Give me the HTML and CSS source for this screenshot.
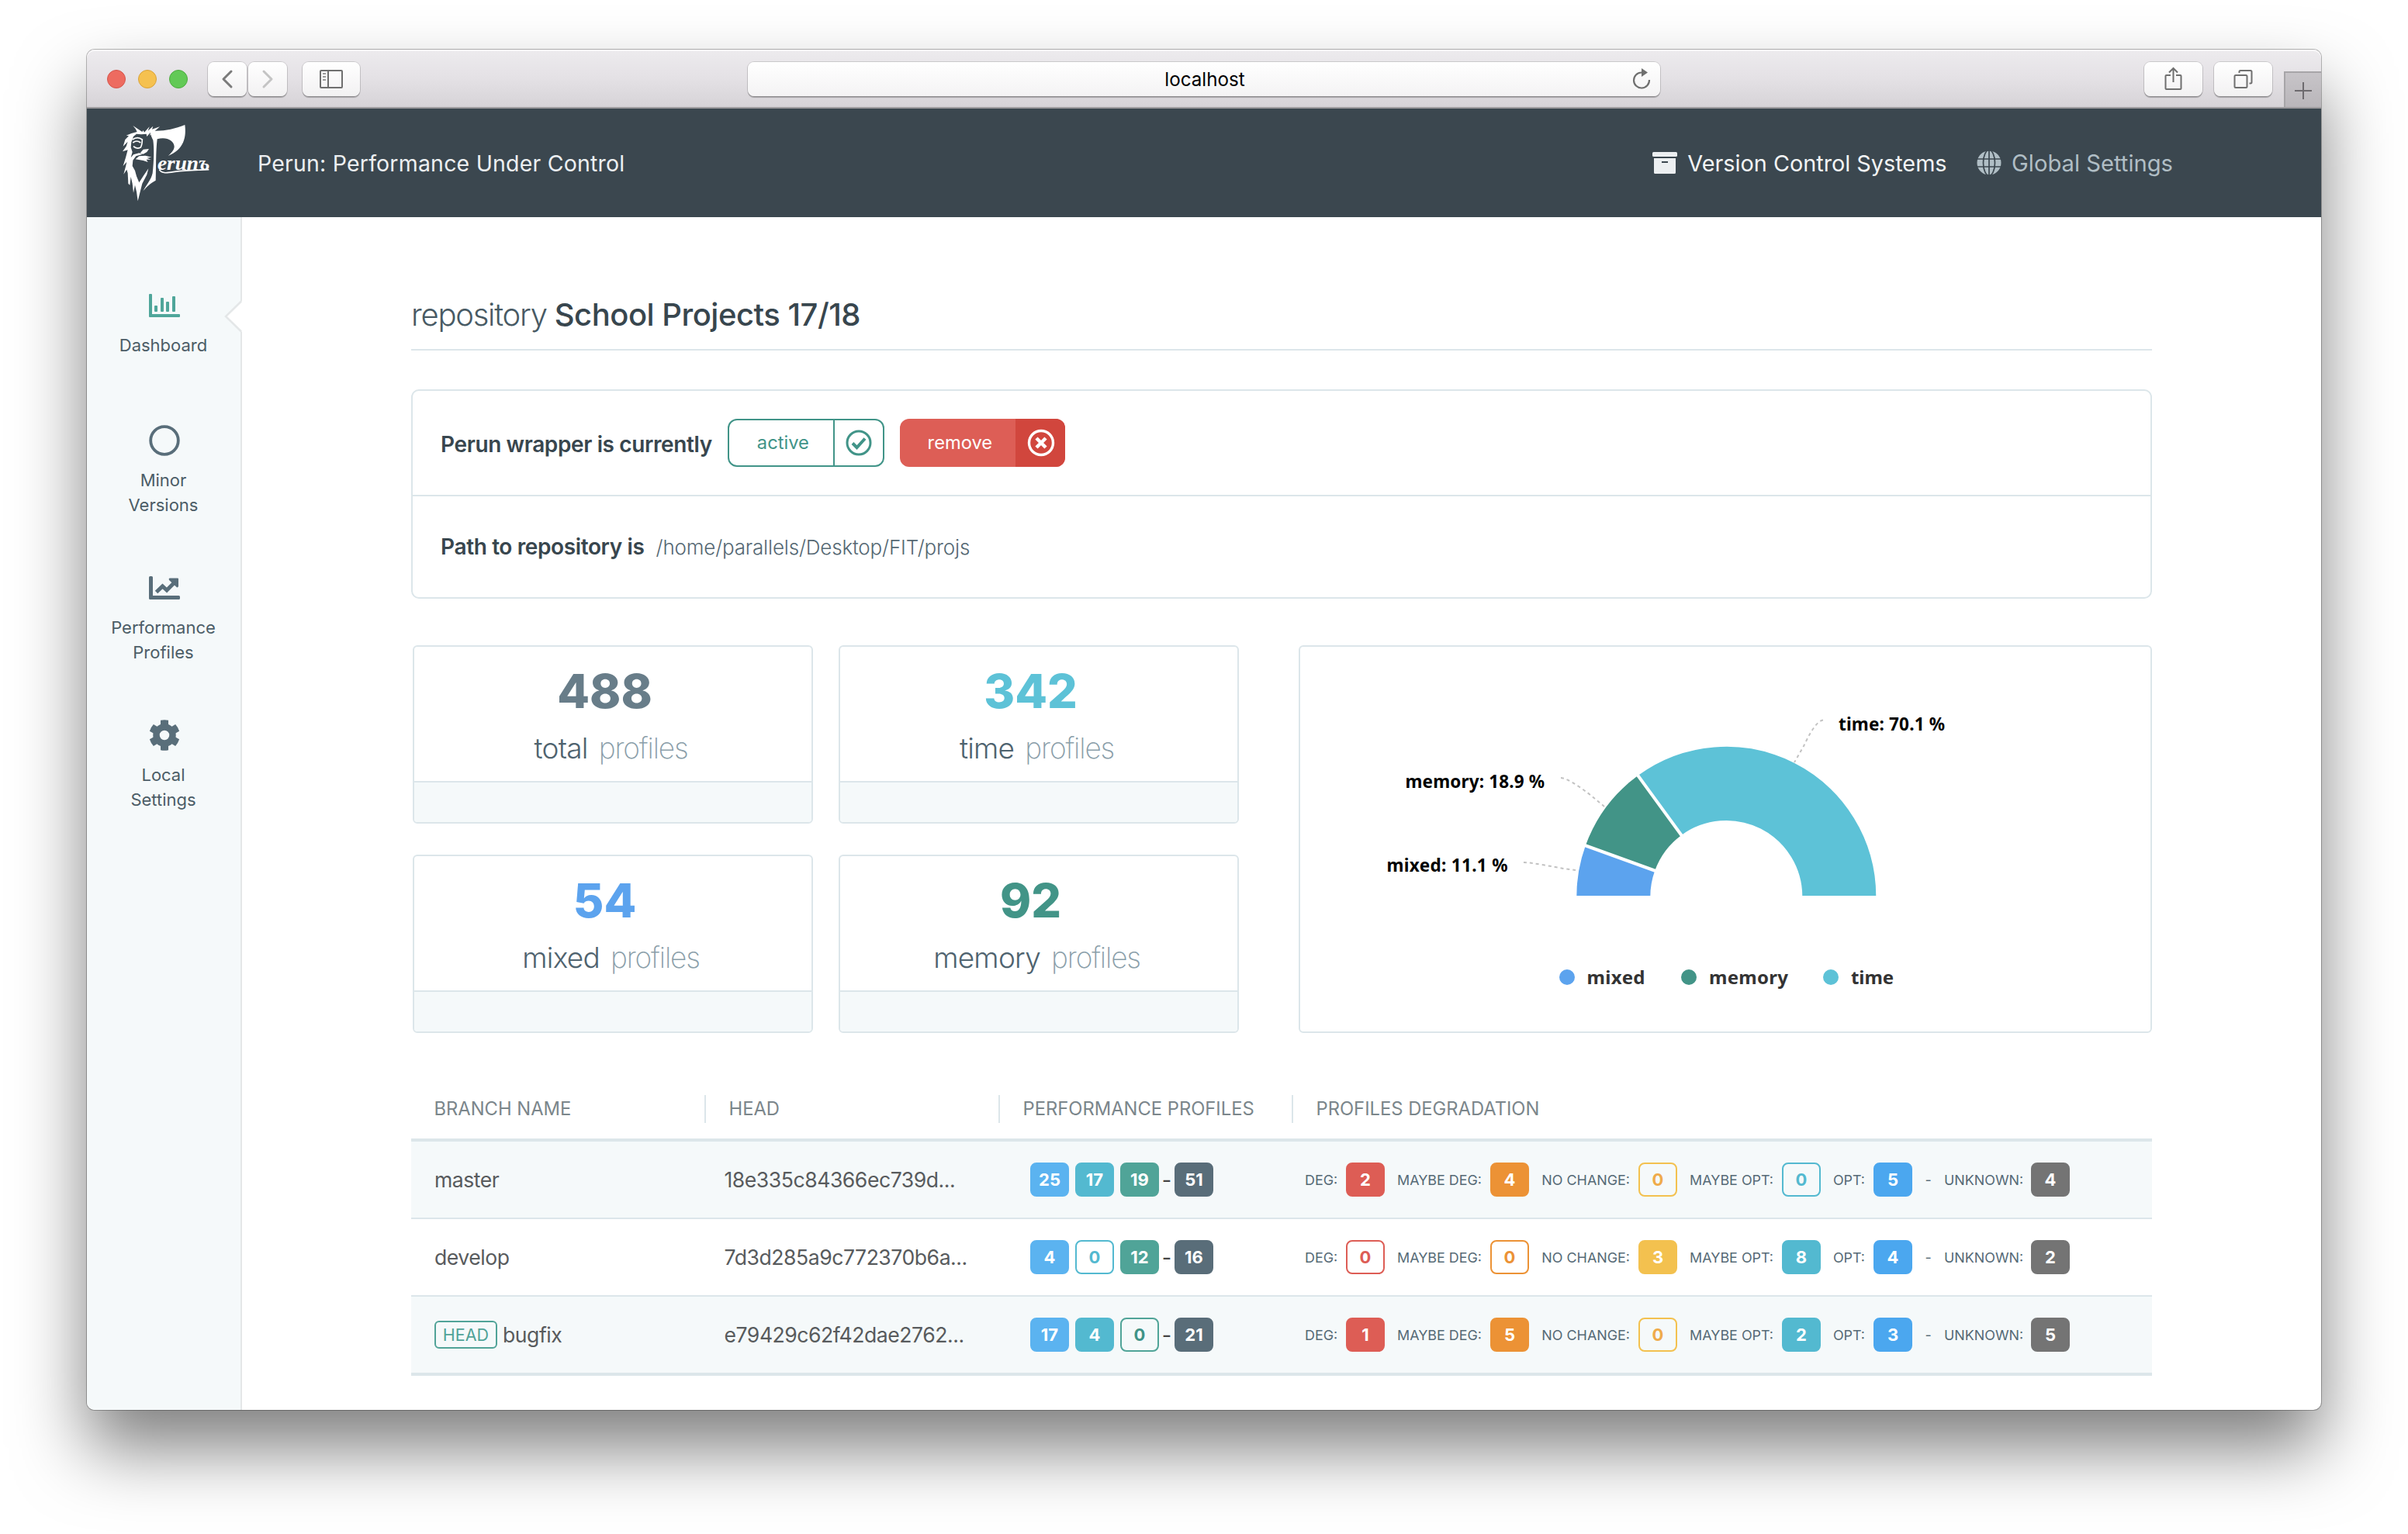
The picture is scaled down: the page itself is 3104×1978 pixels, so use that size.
FILE: index.html
```html
<!DOCTYPE html>
<html lang="en">
<head>
<meta charset="utf-8">
<title>Perun: Performance Under Control</title>
<link rel="stylesheet" href="styles.css">
</head>
<body>
<div class="window">
  <div class="toolbar">
    <div class="lights"><i class="light red"></i><i class="light yellow"></i><i class="light green"></i></div>
    <div class="nav-buttons">
      <span class="tool-btn nav"><svg width="50" height="44" viewBox="0 0 50 44"><path d="M30 12 L20 22 L30 32" fill="none" stroke="#7b7b7b" stroke-width="3" stroke-linecap="round" stroke-linejoin="round"/></svg></span>
      <span class="tool-btn nav"><svg width="50" height="44" viewBox="0 0 50 44"><path d="M20 12 L30 22 L20 32" fill="none" stroke="#c4c4c4" stroke-width="3" stroke-linecap="round" stroke-linejoin="round"/></svg></span>
    </div>
    <span class="tool-btn side"><svg width="74" height="44" viewBox="0 0 74 44"><g fill="none" stroke="#6f6f6f" stroke-width="2"><rect x="23" y="11" width="28" height="22" rx="1"/><path d="M33 11 V33"/></g><path d="M26 15 h4 M26 19 h4 M26 23 h4" stroke="#9a9a9a" stroke-width="2"/></svg></span>
    <div class="address">localhost
      <svg class="reload" width="30" height="34" viewBox="0 0 30 34"><path d="M14 8.500 A10 10 0 1 0 24 18" fill="none" stroke="#6f6f6f" stroke-width="2.200"/><path d="M14 3 L22 8.500 L14 14 Z" fill="#6f6f6f"/></svg>
    </div>
    <div class="right-tools">
      <span class="tool-btn wide"><svg width="75" height="44" viewBox="0 0 75 44"><g fill="none" stroke="#6f6f6f" stroke-width="2"><path d="M34 17 H28.500 Q27.500 17 27.500 18 V34 Q27.500 35 28.500 35 H46.500 Q47.500 35 47.500 34 V18 Q47.500 17 46.500 17 H41"/><path d="M37.500 26 V8 M32 13.500 L37.500 8 L43 13.500"/></g></svg></span>
      <span class="tool-btn wide"><svg width="75" height="44" viewBox="0 0 75 44"><g fill="none" stroke="#6f6f6f" stroke-width="2"><rect x="26.500" y="17" width="16" height="16" rx="1.500"/><path d="M32.500 14 V12.500 Q32.500 11 34 11 H47 Q48.500 11 48.500 12.500 V26 Q48.500 27.500 47 27.500 H45.500"/></g></svg></span>
    </div>
    <div class="new-tab"><svg width="46" height="44" viewBox="0 0 46 44"><path d="M23 12 V34 M12 23 H34" stroke="#6d6a6e" stroke-width="2"/></svg></div>
  </div>

  <header class="header">
    <svg class="logo" width="150" height="130" viewBox="0 0 450 390">
      <g fill="#fff">
        <path d="M184 86 C222 86 258 78 295 63 C301 110 292 158 230 183 C242 172 254 160 254 146 C252 122 222 108 188 118 C182 170 184 230 182 278 C160 290 148 302 134 318 C146 296 164 276 170 250 C176 200 176 150 172 122 C164 106 160 98 168 88 Z"/>
        <path d="M94 66 L112 78 L130 90 L134 84 L138 92 L158 70 L152 86 L172 68 L168 80 L198 70 L178 88 L160 104 L162 92 L148 108 L146 98 L126 100 L108 98 L96 108 L88 130 L86 150 L92 168 L86 190 L96 178 L118 172 L132 176 L106 184 L94 200 L92 222 L102 240 L108 262 L118 286 L136 258 L154 232 L148 256 L130 290 L122 322 L113 358 L108 322 L102 296 L96 326 L92 290 L86 264 L82 296 L76 290 L74 250 L70 236 L58 254 L66 224 L70 206 L56 222 L66 190 L74 160 L54 166 L68 146 L74 128 L56 146 L64 120 L78 106 L68 104 L88 96 L110 90 L104 78 Z"/>
        <path d="M118 184 L142 182 L166 188 L148 191 L164 197 L146 197 L152 207 L134 201 L104 196 Z"/>
        <path d="M134 158 L156 156 L148 168 L134 176 L122 172 Z"/>
      </g>
      <g fill="none" stroke="#fff" stroke-width="5"><path d="M94 132 Q108 120 124 132 M96 146 Q108 158 124 150 Q130 140 130 118 M92 120 Q112 106 130 120"/></g>
      <text x="189" y="238" class="logo-text" textLength="202" lengthAdjust="spacingAndGlyphs">erunъ</text>
      <path d="M196 236 C206 254 232 248 256 244 C300 238 350 238 388 236" fill="none" stroke="#fff" stroke-width="5"/>
    </svg>
    <div class="brand">Perun: Performance Under Control</div>
    <nav class="top-nav">
      <span class="top-link current"><svg width="32" height="28" viewBox="0 0 32 28"><rect width="32" height="6" rx="1.500" fill="#eceff1"/><path fill="#eceff1" fill-rule="evenodd" d="M2 8 H30 V26.500 Q30 28 28.500 28 H3.500 Q2 28 2 26.500 Z M12 12 V14 H20 V12 Z"/></svg>Version Control Systems</span>
      <span class="top-link global"><svg width="32" height="32" viewBox="0 0 32 32"><circle cx="16" cy="16" r="15.500" fill="#b0bec5"/><g fill="none" stroke="#3b474f" stroke-width="1.700"><path d="M0 11 H32 M0 21 H32 M16 0 V32"/><ellipse cx="16" cy="16" rx="7.500" ry="16.500"/></g></svg>Global Settings</span>
    </nav>
  </header>

  <div class="body">
    <aside class="sidebar">
      <a class="side-item one-line"><svg width="40" height="40" viewBox="0 0 40 40" fill="#4fa69a"><path d="M0 6 Q0 5 1 5 H3 Q4 5 4 6 V31 H39 Q40 31 40 32 V34 Q40 35 39 35 H1 Q0 35 0 34 Z"/><rect x="7" y="20" width="4" height="8" rx="1"/><rect x="15" y="10" width="4" height="18" rx="1"/><rect x="22" y="15" width="4" height="13" rx="1"/><rect x="30" y="8" width="4" height="20" rx="1"/></svg><span>Dashboard</span></a>
      <a class="side-item"><svg width="40" height="40" viewBox="0 0 40 40"><circle cx="20" cy="20" r="17.800" fill="none" stroke="#596e7a" stroke-width="3.800"/></svg><span>Minor<br>Versions</span></a>
      <a class="side-item"><svg width="40" height="40" viewBox="0 0 40 40" fill="#596e7a"><path d="M0 6.500 Q0 5 1.500 5 H3.500 Q5 5 5 6.500 V30 H38.500 Q40 30 40 31.500 V33.500 Q40 35 38.500 35 H1.500 Q0 35 0 33.500 Z"/><path d="M9.500 25.500 L17.500 18 L23 23 L33 13" fill="none" stroke="#596e7a" stroke-width="5" stroke-linejoin="miter"/><path d="M26.500 7.500 H37 Q38 7.500 38 8.500 V18 Q37 20.500 35 18.500 L26 10 Q25 8 26.500 7.500 Z"/></svg><span>Performance<br>Profiles</span></a>
      <a class="side-item"><svg width="40" height="40" viewBox="0 0 40 40" fill="#596e7a"><circle cx="20" cy="20" r="10.500" fill="none" stroke="#596e7a" stroke-width="8.500"/><path d="M15 .8 Q20 -.3 25 .8 V7 H15 Z M15 39.200 Q20 40.300 25 39.200 V33 H15 Z"/><path transform="rotate(60 20 20)" d="M15 .8 Q20 -.3 25 .8 V7 H15 Z M15 39.200 Q20 40.300 25 39.200 V33 H15 Z"/><path transform="rotate(120 20 20)" d="M15 .8 Q20 -.3 25 .8 V7 H15 Z M15 39.200 Q20 40.300 25 39.200 V33 H15 Z"/></svg><span>Local<br>Settings</span></a>
      <svg class="notch" width="24" height="42" viewBox="0 0 24 42"><path d="M24 1 L22.500 2.500 L3.500 21 L22.500 39.500 L24 41 Z" fill="#fff"/><path d="M23 1.500 L3 21 L23 40.500" fill="none" stroke="#e4e7e8" stroke-width="2.500"/></svg>
    </aside>

    <main class="main">
      <h1 class="title"><span>repository</span> <b>School Projects 17/18</b></h1>

      <section class="panel">
        <div class="panel-row status">
          <strong>Perun wrapper is currently</strong>
          <span class="btn active"><span class="btn-label">active</span><span class="btn-icon"><svg width="36" height="36" viewBox="0 0 36 36" fill="none" stroke="#419488"><circle cx="18" cy="18" r="15" stroke-width="3"/><path d="M10 18.500 L15.500 24 L26 12.500" stroke-width="4"/></svg></span></span>
          <span class="btn remove"><span class="btn-label">remove</span><span class="btn-icon"><svg width="36" height="36" viewBox="0 0 36 36" fill="none" stroke="#fff"><circle cx="18" cy="18" r="15.500" stroke-width="3.400"/><path d="M12 12 L24 24 M24 12 L12 24" stroke-width="4.500"/></svg></span></span>
        </div>
        <div class="panel-row">
          <strong>Path to repository is</strong><span class="path">/home/parallels/Desktop/FIT/projs</span>
        </div>
      </section>

      <section class="overview">
        <div class="cards">
          <div class="card"><div class="num total">488</div><div class="kind"><b>total</b><span>profiles</span></div><div class="card-foot"></div></div>
          <div class="card"><div class="num time">342</div><div class="kind"><b>time</b><span>profiles</span></div><div class="card-foot"></div></div>
          <div class="card"><div class="num mixed">54</div><div class="kind"><b>mixed</b><span>profiles</span></div><div class="card-foot"></div></div>
          <div class="card"><div class="num memory">92</div><div class="kind"><b>memory</b><span>profiles</span></div><div class="card-foot"></div></div>
        </div>
        <div class="chart">
          <svg width="1096" height="496" viewBox="1676 834 1096 496">
            <g stroke="#fff" stroke-width="2">
              <path fill="#5ca3ee" d="M2031.300 1156 A194 194 0 0 1 2042.900 1090 L2134.100 1123 A97 97 0 0 0 2128.300 1156 Z"/>
              <path fill="#429487" d="M2042.900 1090 A194 194 0 0 1 2110.800 999.300 L2168 1077.700 A97 97 0 0 0 2134.100 1123 Z"/>
              <path fill="#5dc2d7" d="M2110.800 999.300 A194 194 0 0 1 2419.300 1156 L2322.300 1156 A97 97 0 0 0 2168 1077.700 Z"/>
            </g>
            <path d="M2134.100 1123 L2042.900 1090 M2168 1077.700 L2110.800 999.300" stroke="#fff" stroke-width="4"/>
            <g fill="none" stroke="#c2c2c2" stroke-width="2" stroke-dasharray="4 4">
              <path d="M2350 928.500 C2340 930 2330 952 2325 962 L2313 983"/>
              <path d="M2012 1003 C2022 1003 2048 1023 2056 1030 L2068 1040"/>
              <path d="M1964 1112 C1974 1112 2004 1118 2016 1120 L2031 1122"/>
            </g>
            <g class="chart-label">
              <text x="2370" y="942" textLength="137">time: 70.1 %</text>
              <text x="1811.500" y="1016" textLength="179.500">memory: 18.9 %</text>
              <text x="1787.500" y="1124" textLength="156">mixed: 11.1 %</text>
            </g>
            <circle cx="2020" cy="1260" r="10" fill="#5ca3ee"/><circle cx="2177" cy="1260" r="10" fill="#429487"/><circle cx="2360" cy="1260" r="10" fill="#5dc2d7"/>
            <g class="legend-label">
              <text x="2045.500" y="1269" textLength="75">mixed</text>
              <text x="2203" y="1269" textLength="102">memory</text>
              <text x="2386" y="1269" textLength="55">time</text>
            </g>
          </svg>
        </div>
      </section>

      <section class="table">
        <div class="thead">
          <div>BRANCH NAME</div><div>HEAD</div><div>PERFORMANCE PROFILES</div><div>PROFILES DEGRADATION</div>
        </div>
        <div class="row odd">
          <div class="name">master</div><div class="hash">18e335c84366ec739d...</div>
          <div class="perf"><i class="badge blue">25</i><i class="badge cyan">17</i><i class="badge teal">19</i><em>-</em><i class="badge slate">51</i></div>
          <div class="deg"><span>DEG:</span><i class="badge red">2</i><span>MAYBE DEG:</span><i class="badge orange">4</i><span>NO CHANGE:</span><i class="badge yellow empty">0</i><span>MAYBE OPT:</span><i class="badge cyan empty">0</i><span>OPT:</span><i class="badge opt">5</i><em>-</em><span>UNKNOWN:</span><i class="badge gray">4</i></div>
        </div>
        <div class="row">
          <div class="name">develop</div><div class="hash">7d3d285a9c772370b6a...</div>
          <div class="perf"><i class="badge blue">4</i><i class="badge cyan empty">0</i><i class="badge teal">12</i><em>-</em><i class="badge slate">16</i></div>
          <div class="deg"><span>DEG:</span><i class="badge red empty">0</i><span>MAYBE DEG:</span><i class="badge orange empty">0</i><span>NO CHANGE:</span><i class="badge yellow">3</i><span>MAYBE OPT:</span><i class="badge cyan">8</i><span>OPT:</span><i class="badge opt">4</i><em>-</em><span>UNKNOWN:</span><i class="badge gray">2</i></div>
        </div>
        <div class="row odd">
          <div class="name"><span class="head-tag">HEAD</span>bugfix</div><div class="hash">e79429c62f42dae2762...</div>
          <div class="perf"><i class="badge blue">17</i><i class="badge cyan">4</i><i class="badge teal empty">0</i><em>-</em><i class="badge slate">21</i></div>
          <div class="deg"><span>DEG:</span><i class="badge red">1</i><span>MAYBE DEG:</span><i class="badge orange">5</i><span>NO CHANGE:</span><i class="badge yellow empty">0</i><span>MAYBE OPT:</span><i class="badge cyan">2</i><span>OPT:</span><i class="badge opt">3</i><em>-</em><span>UNKNOWN:</span><i class="badge gray">5</i></div>
        </div>
      </section>
    </main>
  </div>
</div>
</body>
</html>
```
FILE: styles.css
```css
* { box-sizing: border-box; }
body {
  margin: 0;
  padding: 64px 112px 160px;
  height: 1978px;
  overflow: hidden;
  background: #fff;
  font-family: Inter, "Liberation Sans", sans-serif;
  color: #38474f;
}
svg { display: block; flex: none; }
i, em { font-style: normal; }

.window {
  width: 2880px;
  height: 1754px;
  display: flex;
  flex-direction: column;
  border-radius: 10px;
  background: #fff;
  box-shadow: 0 0 0 1px rgba(0, 0, 0, .27), 0 50px 90px rgba(0, 0, 0, .5);
}

/* browser toolbar */
.toolbar {
  height: 76px;
  flex: none;
  display: flex;
  align-items: flex-start;
  padding: 16px 0 0 26px;
  border-bottom: 2px solid #9d9b9e;
  border-radius: 10px 10px 0 0;
  background: linear-gradient(#edebee, #e4e1e5 50%, #d6d3d7);
  box-shadow: inset 0 2px 0 #f7f6f7;
}
.lights { display: flex; gap: 16px; width: 130px; padding-top: 10px; }
.light { width: 24px; height: 24px; border-radius: 50%; border: 1px solid; }
.light.red { background: #ed6b60; border-color: #d4554c; }
.light.yellow { background: #f5c150; border-color: #d9a23a; }
.light.green { background: #62c956; border-color: #4dab40; }
.nav-buttons { display: flex; gap: 2px; margin-right: 20px; }
.tool-btn {
  height: 44px;
  border-radius: 8px;
  background: linear-gradient(#fff, #f2f1f2);
  box-shadow: 0 0 0 1px rgba(0, 0, 0, .13), 0 1.500px 1px rgba(0, 0, 0, .25);
}
.tool-btn.nav { width: 50px; }
.tool-btn.side { width: 74px; }
.tool-btn.wide { width: 75px; }
.address {
  position: relative;
  width: 1176px;
  height: 44px;
  margin-left: 500px;
  padding-left: 2px;
  border-radius: 8px;
  background: linear-gradient(#fff, #f4f3f4);
  box-shadow: 0 0 0 1px rgba(0, 0, 0, .13), 0 1.500px 1px rgba(0, 0, 0, .25);
  text-align: center;
  font-size: 24.200px;
  line-height: 45px;
  color: #000;
}
.reload { position: absolute; right: 8px; top: 5px; }
.right-tools { display: flex; gap: 15px; margin-left: 624px; }
.new-tab {
  width: 48px;
  height: 46px;
  margin: 12px 0 0 auto;
  border: solid #a7a5a8;
  border-width: 2px 0 0 2px;
  background: linear-gradient(#c7c4c8, #b9b6ba);
}

/* application header */
.header {
  height: 140px;
  flex: none;
  display: flex;
  align-items: center;
  padding: 0 191px 0 28px;
  background: #3b474f;
}
.logo { margin-top: -10px; }
.logo-text { font: italic 700 78px "Liberation Serif", serif; fill: #fff; }
.brand { margin-left: 42px; font-size: 28.500px; letter-spacing: .2px; color: #eceff1; }
.top-nav { display: flex; gap: 38px; margin-left: auto; }
.top-link { display: flex; align-items: center; gap: 13.500px; font-size: 28.800px; color: #b0bec5; }
.top-link.current { color: #f2f4f5; }
.top-link.global { font-size: 29.200px; }

/* layout */
.body { flex: 1; display: flex; }
.sidebar {
  position: relative;
  width: 200px;
  flex: none;
  padding: 94px 0 0;
  border-right: 2px solid #e4e7e8;
  border-radius: 0 0 0 10px;
  background: #f5f9fa;
}
.side-item {
  display: flex;
  flex-direction: column;
  align-items: center;
  gap: 15px;
  margin-bottom: 71px;
  padding-left: 2px;
  font-size: 22px;
  line-height: 32px;
  text-align: center;
  color: #4c5d67;
}
.side-item span { margin-left: -3px; }
.side-item.one-line { margin-bottom: 87px; }
.notch { position: absolute; right: -2px; top: 107px; }

.main { width: 2462px; padding: 100px 0 0 218px; }
.title {
  margin: 0;
  padding-bottom: 19px;
  border-bottom: 2px solid #dce6ea;
  font-size: 40px;
  line-height: 51px;
  font-weight: 300;
  letter-spacing: -1.250px;
  color: #485a64;
}
.title b { font-weight: 500; letter-spacing: -.500px; color: #38464e; }

.panel { margin-top: 50px; border: 2px solid #dce6ea; border-radius: 10px; }
.panel-row { height: 130px; display: flex; align-items: center; padding-left: 36px; }
.panel-row strong { font-size: 28px; font-weight: 600; letter-spacing: -.380px; color: #38464e; }
.panel-row.status { height: 136px; border-bottom: 2px solid #dce6ea; }
.status strong { margin-right: 20px; padding-top: 3px; }
.path { margin-left: 15px; font-size: 26px; font-weight: 300; letter-spacing: -.180px; color: #556873; }
.btn { display: flex; height: 62px; border-radius: 12px; font-size: 23.700px; line-height: 58px; text-align: center; overflow: hidden; }
.btn-icon { display: flex; align-items: center; justify-content: center; }
.btn.active { width: 202px; margin-right: 20px; border: 2px solid #419488; color: #419488; }
.active .btn-label { width: 134px; padding-left: 5px; }
.active .btn-icon { flex: 1; border-left: 2px solid #419488; }
.btn.remove { width: 213px; background: #dd5e56; color: #fff; line-height: 61px; }
.remove .btn-label { width: 149px; padding-left: 6px; }
.remove .btn-icon { flex: 1; background: #d1463d; padding-left: 2px; }

/* statistics and chart */
.overview { display: flex; justify-content: space-between; margin-top: 60px; padding-left: 2px; }
.cards { display: grid; grid-template-columns: 516px 516px; gap: 40px 33px; }
.card { height: 230px; display: flex; flex-direction: column; padding-top: 27px; border: 2px solid #dce6ea; border-radius: 6px; overflow: hidden; }
.num { padding-right: 21px; font-size: 60.800px; font-weight: 800; line-height: 60px; text-align: center; }
.num.total { color: #687d89; }
.num.time { color: #5dc2d7; }
.num.mixed { color: #5ca3ee; }
.num.memory { color: #429487; }
.kind { display: flex; justify-content: center; gap: 14px; margin-top: 22px; padding-right: 5px; font-size: 37px; line-height: 44px; }
.kind b { font-weight: 300; letter-spacing: -.750px; color: #4f636f; }
.kind span { font-weight: 200; letter-spacing: -1.150px; color: #8a9ea9; }
.card-foot { margin-top: auto; height: 53px; border-top: 2px solid #dce6ea; background: #f5f9fa; }
.chart { width: 1100px; height: 500px; border: 2px solid #dce6ea; border-radius: 6px; }
.chart-label { font: 700 22.500px "Noto Sans", sans-serif; fill: #000; }
.legend-label { font: 700 24px "Noto Sans", sans-serif; fill: #333; }

/* branches */
.table { margin-top: 80px; border-bottom: 2px solid #dce6ea; }
.thead, .row { display: grid; grid-template-columns: 380px 379px 378px 1fr; }
.thead { padding-bottom: 20px; border-bottom: 4px solid #dce6ea; font-size: 23.750px; line-height: 36px; color: #7b868b; }
.thead div { padding-left: 29.500px; border-right: 2px solid #dce6ea; }
.thead div:last-child { border-right: 0; }
.row { height: 100px; border-bottom: 2px solid #dce6ea; align-items: center; }
.row.odd { background: #f5f9fa; }
.name, .hash { font-size: 26.600px; letter-spacing: -.470px; color: #585b5d; }
.name { display: flex; align-items: center; padding-left: 30px; }
.hash { padding-left: 23.500px; }
.head-tag { width: 81px; height: 36px; margin: 0 7px 0 0; border: 2px solid #51a398; border-radius: 6px; font-size: 21.500px; line-height: 32px; letter-spacing: 0; text-align: center; color: #51a398; }
.perf { display: flex; align-items: center; gap: 8px; padding-left: 39px; }
.perf em { width: 20px; margin: 0 -8px; text-align: center; font-size: 27px; color: #444; }
.badge { width: 50px; height: 44px; border-radius: 8px; border: 2px solid var(--c); background: var(--c); font-size: 22px; font-weight: 700; line-height: 40px; text-align: center; color: #fff; }
.badge.empty { background: none; color: var(--t, var(--c)); }
.blue { --c: #5bb3f0; }
.cyan { --c: #53b9d0; }
.teal { --c: #50a498; --t: #3f9387; }
.slate { --c: #596d79; }
.red { --c: #dd5d55; }
.orange { --c: #ec9235; }
.yellow { --c: #f3c14f; --t: #efab4a; }
.opt { --c: #4ba7ef; }
.gray { --c: #747474; }
.light.red, .light.yellow { --c: none; }
.deg {
  display: grid;
  grid-template-columns: 53px 50px 136px 50px 141px 50px 135px 50px 68px 50px 41px 112px 50px;
  align-items: center;
  padding-left: 15px;
  font-size: 17.900px;
  text-align: right;
  color: #566a76;
}
.deg span { padding-right: 11px; white-space: nowrap; }
.deg em { text-align: center; }
```
